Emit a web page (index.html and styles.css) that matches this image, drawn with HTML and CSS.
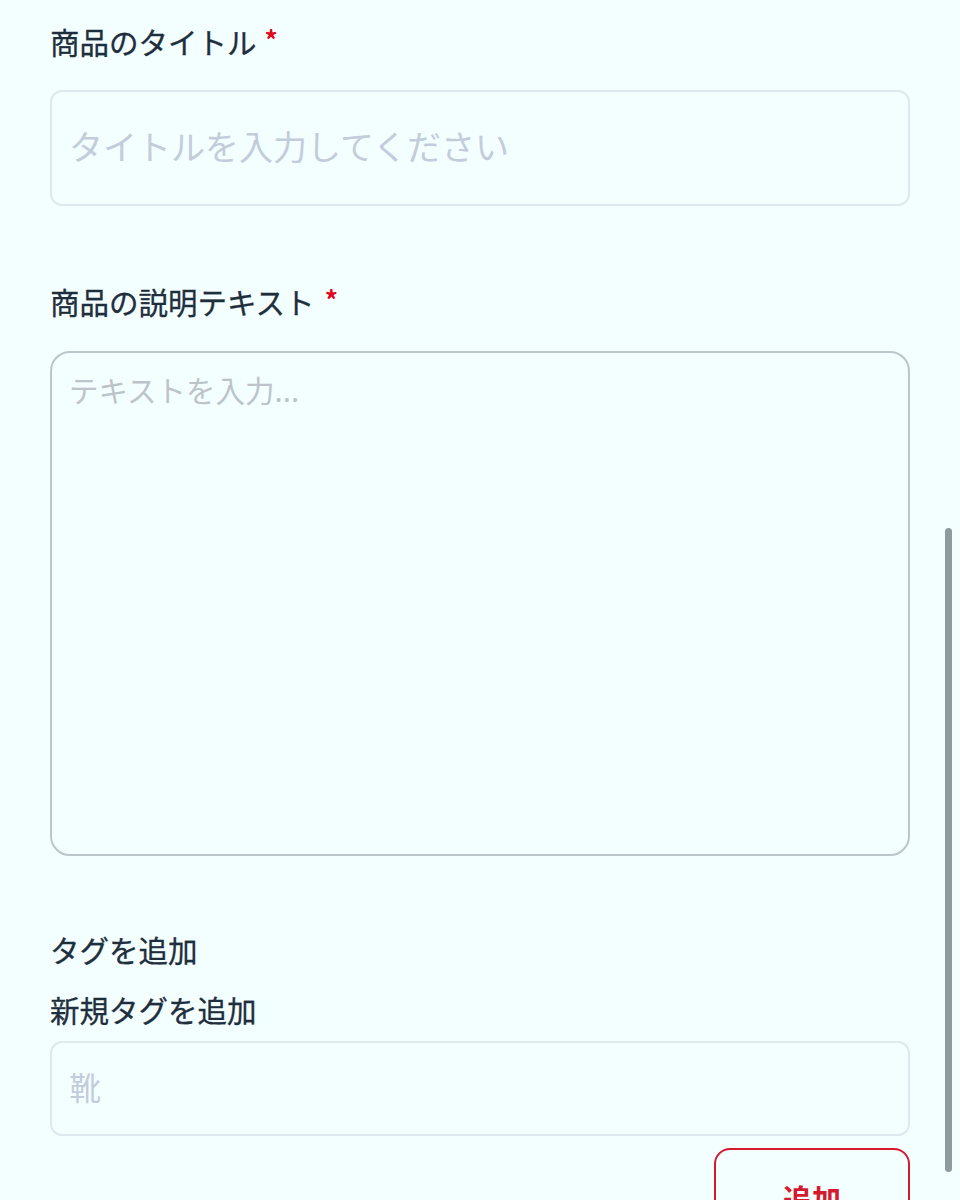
FILE: index.html
```html
<!DOCTYPE html>
<html lang="ja">
<head>
<meta charset="utf-8">
<title>商品フォーム</title>
<link rel="stylesheet" href="styles.css">
</head>
<body>
<main class="form">
  <div class="field field-title">
    <label class="label" for="title">商品のタイトル<span class="req">*</span></label>
    <input id="title" class="input input-title" type="text" placeholder="タイトルを入力してください">
  </div>
  <div class="field field-desc">
    <label class="label" for="desc">商品の説明テキスト<span class="req req-gap">*</span></label>
    <textarea id="desc" class="textarea" placeholder="テキストを入力..."></textarea>
  </div>
  <div class="field field-tags">
    <div class="label">タグを追加</div>
    <label class="label sublabel" for="tag">新規タグを追加</label>
    <input id="tag" class="input input-tag" type="text" placeholder="靴">
    <div class="actions">
      <button class="btn-add" type="button">追加</button>
    </div>
  </div>
</main>
<div class="scrollbar"></div>
</body>
</html>
```

FILE: styles.css
```css
html {
  overflow: hidden;
  height: 100%;
}
body {
  margin: 0;
  background: #f3feff;
  font-family: "Noto Sans CJK JP", "Noto Sans", sans-serif;
  color: #1e2b38;
}
.form {
  width: 860px;
  padding: 18px 0 0 50px;
  display: flex;
  flex-direction: column;
}
.field {
  display: flex;
  flex-direction: column;
}
.label {
  font-size: 29.5px;
  line-height: 42px;
  height: 42px;
  color: #1f2e3d;
  font-weight: 400;
  display: block;
  -webkit-text-stroke: 0.3px #1f2e3d;
}
.req {
  color: #e0051c;
  font-size: 26px;
  margin-left: 8px;
  vertical-align: 4px;
  font-weight: 700;
  -webkit-text-stroke: 0;
}
.req-gap {
  margin-left: 10px;
}
.input,
.textarea {
  box-sizing: border-box;
  width: 860px;
  margin: 0;
  font-family: "Noto Sans CJK JP", "Noto Sans", sans-serif;
  background: #f3feff;
  outline: none;
  color: #1e2b38;
}
.input {
  border: 2px solid #dfe8ef;
  border-radius: 12px;
  padding: 0 18px 6px 17px;
}
.input-title {
  margin-top: 30px;
  height: 116px;
  font-size: 34px;
}
.input::placeholder {
  color: #c2ccdb;
}
.field-desc {
  margin-top: 72px;
}
.textarea {
  margin-top: 31px;
  height: 505px;
  border: 2px solid #bcc5ca;
  border-radius: 20px;
  padding: 16px 18px 16px 17px;
  font-size: 29.5px;
  line-height: 41px;
  resize: none;
}
.textarea::placeholder {
  color: #bcc4c9;
}
.field-tags {
  margin-top: 72px;
}
.sublabel {
  margin-top: 18px;
}
.input-tag {
  margin-top: 11px;
  height: 95px;
  font-size: 32px;
}
.actions {
  display: flex;
  justify-content: flex-end;
  margin-top: 12px;
}
.btn-add {
  width: 196px;
  height: 100px;
  box-sizing: border-box;
  border: 2px solid #d51a30;
  border-radius: 16px;
  background: #f3feff;
  color: #d51a30;
  font-family: "Noto Sans CJK JP", "Noto Sans", sans-serif;
  font-size: 29px;
  font-weight: 700;
  padding: 0;
}
.scrollbar {
  position: absolute;
  left: 945px;
  top: 528px;
  width: 7px;
  height: 644px;
  border-radius: 4px;
  background: #8d9ba0;
}
```
